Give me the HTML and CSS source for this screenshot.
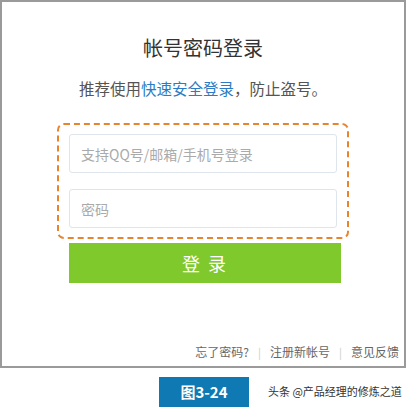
FILE: index.html
```html
<!DOCTYPE html>
<html lang="zh-CN">
<head>
    <meta charset="UTF-8">
    <meta name="viewport" content="width=device-width, initial-scale=1.0">
    <title>帐号密码登录</title>
    <link rel="stylesheet" href="styles.css">
</head>
<body>
    <div class="frame">
        <h1 class="title">帐号密码登录</h1>
        <p class="tip">推荐使用<a href="#" class="quick">快速安全登录</a>，防止盗号。</p>

        <div class="field-box">
            <input type="text" class="field" placeholder="支持QQ号/邮箱/手机号登录">
            <input type="password" class="field" placeholder="密码">
        </div>
        <button class="login-btn">登 录</button>

        <div class="links">
            <a href="#">忘了密码?</a>
            <span class="sep">|</span>
            <a href="#">注册新帐号</a>
            <span class="sep">|</span>
            <a href="#">意见反馈</a>
        </div>
    </div>

    <div class="caption">
        <div class="fig-label">图3-24</div>
        <div class="source">头条 @产品经理的修炼之道</div>
    </div>
</body>
</html>
```

FILE: styles.css
```css
body {
    margin: 0;
    width: 408px;
    font-family: "Noto Sans CJK SC", "Noto Sans", sans-serif;
    background-color: #fff;
}
.frame {
    box-sizing: border-box;
    width: 406px;
    height: 368px;
    border: 2px solid #9a9a9a;
    padding: 32px 5px 5px 5px;
    display: flex;
    flex-direction: column;
    align-items: center;
}
.title {
    margin: 0;
    font-size: 20px;
    line-height: 28px;
    font-weight: normal;
    color: #333;
}
.tip {
    margin: 15px 0 0 0;
    font-size: 15.5px;
    line-height: 22px;
    color: #555;
}
.quick {
    color: #2b7cc4;
    text-decoration: none;
}
.field-box {
    box-sizing: border-box;
    width: 292px;
    margin-top: 24px;
    padding: 9px 10px;
    border: 2px dashed #e8842c;
    border-radius: 7px;
    display: flex;
    flex-direction: column;
    gap: 16px;
}
.field {
    box-sizing: border-box;
    height: 39px;
    width: 100%;
    padding: 0 11px;
    border: 1px solid #dfe5ec;
    border-radius: 3px;
    font-family: inherit;
    font-size: 14px;
    color: #333;
    outline: none;
}
.field::placeholder {
    color: #aaa;
}
.login-btn {
    width: 272px;
    height: 40px;
    margin-top: 4px;
    margin-left: 4px;
    border: none;
    background-color: #80c92c;
    color: #fff;
    font-family: inherit;
    font-size: 18px;
    letter-spacing: 2px;
}
.links {
    margin-top: auto;
    align-self: flex-end;
    display: flex;
    align-items: center;
    gap: 9px;
    font-size: 12px;
    line-height: 18px;
}
.links a {
    color: #666;
    text-decoration: none;
}
.sep {
    color: #ccc;
    font-size: 11px;
}
.caption {
    display: flex;
    align-items: center;
    padding-left: 159px;
    margin-top: 9px;
}
.fig-label {
    width: 90px;
    height: 30px;
    line-height: 30px;
    text-align: center;
    background-color: #0e79b2;
    color: #fff;
    font-size: 15px;
    font-weight: bold;
}
.source {
    margin-left: 19px;
    font-size: 11px;
    color: #333;
    margin-top: -2px;
}
```
